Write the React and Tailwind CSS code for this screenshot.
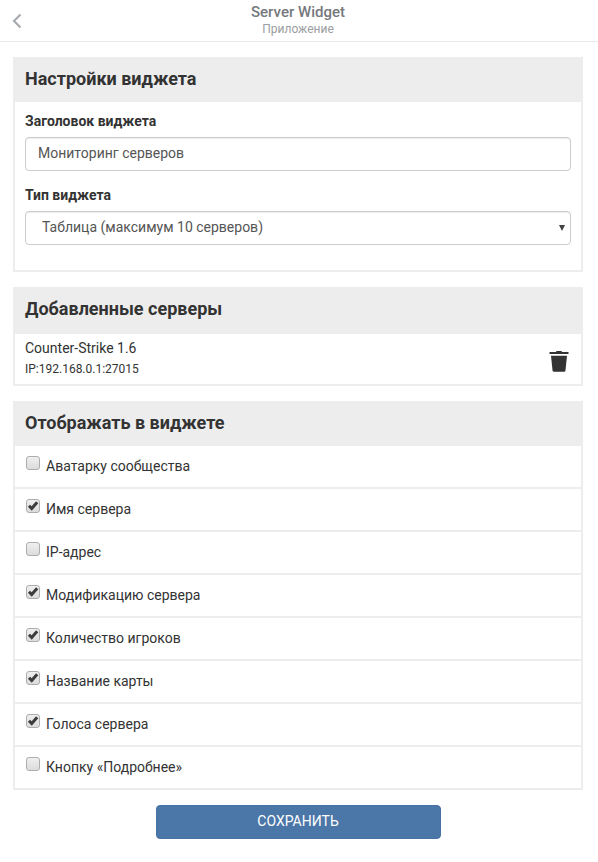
import React, { useState } from 'react';

const initialOptions = [
  { id: 'avatar', label: 'Аватарку сообщества', checked: false },
  { id: 'name', label: 'Имя сервера', checked: true },
  { id: 'ip', label: 'IP-адрес', checked: false },
  { id: 'mod', label: 'Модификацию сервера', checked: true },
  { id: 'players', label: 'Количество игроков', checked: true },
  { id: 'map', label: 'Название карты', checked: true },
  { id: 'votes', label: 'Голоса сервера', checked: true },
  { id: 'more', label: 'Кнопку «Подробнее»', checked: false },
];

const Header = () => (
  <header className="grid grid-cols-[34px_1fr_36px] items-center h-[42px] border-b border-[#e7e8ec]">
    <button type="button" aria-label="Назад" className="flex items-center justify-center h-10 text-[#a8abaf]">
      <svg className="w-[10px] h-4" viewBox="0 0 10 16" fill="none" stroke="currentColor" strokeWidth="2.2">
        <path d="M8.5 1.5L2 8l6.5 6.5" />
      </svg>
    </button>
    <div className="text-center pb-[2px]">
      <h1 className="text-[15px] leading-[18px] font-medium text-[#75787d]">Server Widget</h1>
      <p className="text-xs leading-4 text-[#9a9da1]">Приложение</p>
    </div>
  </header>
);

const Panel = ({ title, children }) => (
  <section className="border-2 border-[#ededed]">
    <h2 className="bg-[#ededed] px-[10px] pt-2 pb-[11px] text-lg leading-6 font-bold">{title}</h2>
    {children}
  </section>
);

const TrashIcon = () => (
  <svg className="w-5 h-[22px]" viewBox="0 0 20 22" fill="currentColor">
    <path d="M7 2Q7 1 8 1h4q1 0 1 1h6.5v2H.5V2z" />
    <path d="M2 5.800h16l-1.500 14.400q-.2 1.500-1.500 1.500H5q-1.300 0-1.500-1.500z" />
  </svg>
);

const OptionRow = ({ option, onToggle }) => (
  <li className="flex items-start h-[43px] px-[10px] border-b-2 border-[#ededed] last:h-[41px] last:border-b-0">
    <label className="flex items-start gap-[6px] pt-[10px] pl-px">
      <span className="grid shrink-0">
        <input
          type="checkbox"
          checked={option.checked}
          onChange={() => onToggle(option.id)}
          className="peer col-start-1 row-start-1 appearance-none w-[14px] h-[14px] rounded-[3px] border border-[#adadad] bg-linear-to-b from-[#efefef] to-[#dcdcdc]"
        />
        <svg
          className="hidden peer-checked:block col-start-1 row-start-1 w-[14px] h-[14px] pointer-events-none"
          viewBox="0 0 14 14"
          fill="none"
          stroke="#3c3c3c"
          strokeWidth="3"
        >
          <path d="M3 6.800L5.700 9.600L11.200 3.200" />
        </svg>
      </span>
      <span className="text-sm leading-5">{option.label}</span>
    </label>
  </li>
);

export default function App() {
  const [title, setTitle] = useState('Мониторинг серверов');
  const [options, setOptions] = useState(initialOptions);

  const toggleOption = (id) => {
    setOptions(options.map((o) => (o.id === id ? { ...o, checked: !o.checked } : o)));
  };

  return (
    <div className="bg-white text-[#333] font-['Roboto',sans-serif] text-sm">
      <Header />

      <main className="flex flex-col gap-[15px] pl-[13px] pr-[15px] py-[15px]">
        <Panel title="Настройки виджета">
          <div className="px-[10px] pt-[9px] pb-[25px]">
            <label htmlFor="widget-title" className="block mb-[6px] leading-5 font-bold">
              Заголовок виджета
            </label>
            <input
              id="widget-title"
              type="text"
              value={title}
              onChange={(e) => setTitle(e.target.value)}
              className="block w-full h-[34px] px-3 pb-[2px] rounded-sm border border-[#ccc] text-[#555] shadow-[inset_0_1px_1px_rgba(0,0,0,0.075)]"
            />

            <label htmlFor="widget-type" className="block mt-[14px] mb-[6px] leading-5 font-bold">
              Тип виджета
            </label>
            <div className="grid items-center">
              <select
                id="widget-type"
                className="col-start-1 row-start-1 appearance-none w-full h-[34px] px-4 pb-[2px] rounded-sm border border-[#ccc] bg-white text-[#555] shadow-[inset_0_1px_1px_rgba(0,0,0,0.075)]"
              >
                <option>Таблица (максимум 10 серверов)</option>
              </select>
              <svg
                className="col-start-1 row-start-1 justify-self-end mr-[6px] w-[6px] h-[6px] pointer-events-none"
                viewBox="0 0 6 6"
                fill="#444"
              >
                <path d="M0 0h6L3 6z" />
              </svg>
            </div>
          </div>
        </Panel>

        <Panel title="Добавленные серверы">
          <div className="flex items-start justify-between pl-[10px] pr-3 pt-1 pb-1 border-t-2 border-[#ededed]">
            <div>
              <p className="leading-5">Counter-Strike 1.6</p>
              <p className="text-xs leading-[22px]">IP:192.168.0.1:27015</p>
            </div>
            <button type="button" aria-label="Удалить сервер" className="pt-3">
              <TrashIcon />
            </button>
          </div>
        </Panel>

        <Panel title="Отображать в виджете">
          <ul>
            {options.map((option) => (
              <OptionRow key={option.id} option={option} onToggle={toggleOption} />
            ))}
          </ul>
        </Panel>

        <button
          type="button"
          className="self-center w-1/2 h-[34px] pb-[2px] rounded-sm border border-[#4872a3] bg-[#4a76a8] text-white uppercase"
        >
          Сохранить
        </button>
      </main>
    </div>
  );
}
